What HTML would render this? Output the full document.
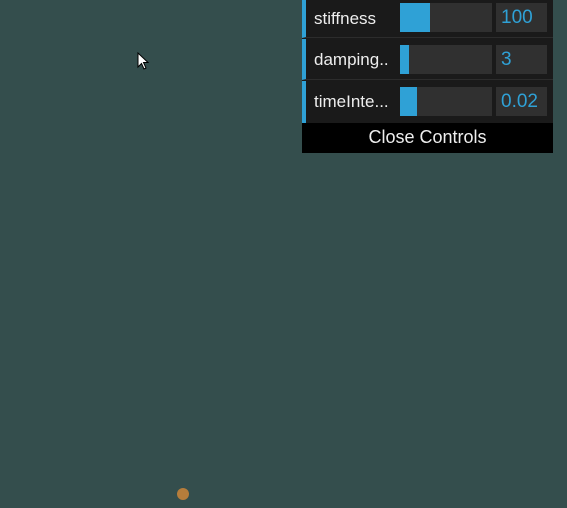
<!DOCTYPE html><html><head><style>
body{margin:0;width:567px;height:508px;background:#344e4d;position:relative;overflow:hidden;font-family:"Liberation Sans",sans-serif}
.p{position:absolute;left:302px;top:0;width:251px;height:153px;background:#1a1a1a}
.r{position:absolute;left:0;width:251px;height:38px;border-left:4px solid #2fa1d6;box-sizing:border-box;border-bottom:1px solid #2c2c2c}
.l{position:absolute;left:8px;top:9px;color:#eee;font-size:17px}
.s{position:absolute;left:94px;top:3px;width:92px;height:29px;background:#303030}
.f{height:100%;background:#2fa1d6}
.n{position:absolute;left:190px;top:3px;width:51px;height:29px;background:#303030;color:#2fa1d6;font-size:19px;line-height:30px;padding-left:5px;box-sizing:border-box}
.c{position:absolute;left:0;top:123px;width:251px;height:30px;background:#000;color:#eee;text-align:center;line-height:29px;font-size:18px}
</style></head><body>
<div class="p">
<div class="r" style="top:0"><span class="l">stiffness</span><div class="s"><div class="f" style="width:30px"></div></div><div class="n">100</div></div>
<div class="r" style="top:39px;height:41px"><span class="l" style="top:11px">damping..</span><div class="s" style="top:6px"><div class="f" style="width:9px"></div></div><div class="n" style="top:6px">3</div></div>
<div class="r" style="top:81px;height:42px;border-bottom:none"><span class="l" style="top:11px">timeInte...</span><div class="s" style="top:6px"><div class="f" style="width:17px"></div></div><div class="n" style="top:6px">0.02</div></div>
<div class="c">Close Controls</div>
</div>
<svg style="position:absolute;left:137px;top:52px" width="12" height="19"><path d="M1 1 L1 15 L4.5 11.5 L7 17 L9 16 L6.5 10.5 L11 10.5 Z" fill="#fff" stroke="#000" stroke-width="1"/></svg>
<div style="position:absolute;left:177px;top:488px;width:12px;height:12px;border-radius:50%;background:#b67d3b"></div>
</body></html>
